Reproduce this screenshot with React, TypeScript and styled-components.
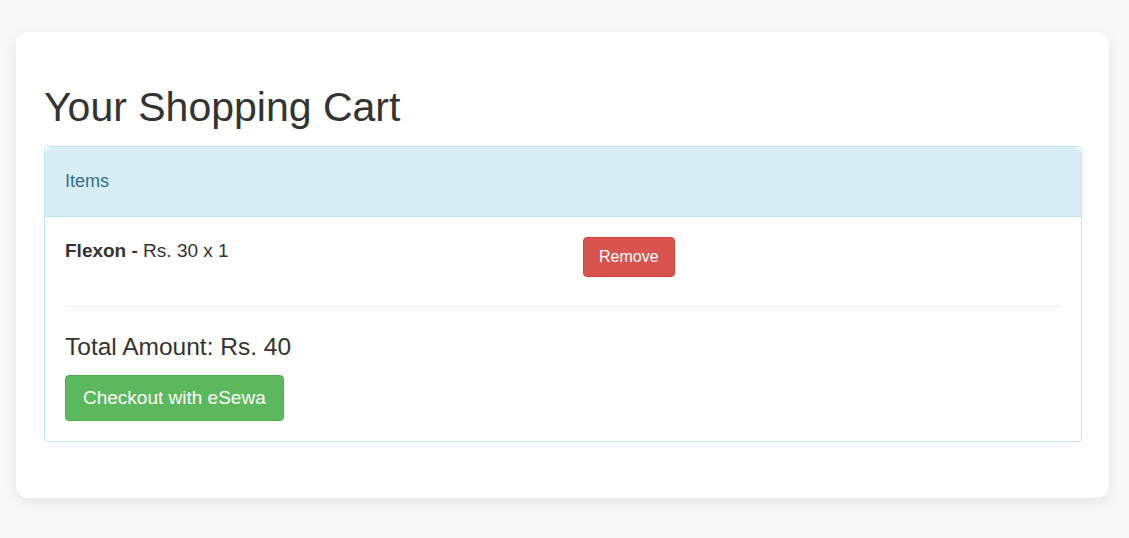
import React from "react";
import styled, { createGlobalStyle } from "styled-components";

const Global = createGlobalStyle`
  html, body { margin: 0; padding: 0; }
  body {
    background: #f8f8f8;
    font-family: "Liberation Sans", Arial, Helvetica, sans-serif;
    color: #333;
  }
  * { box-sizing: border-box; }
`;

const Page = styled.div`
  padding: 32px 20px 40px 16px;
`;

const Card = styled.div`
  background: #fff;
  border-radius: 12px;
  box-shadow: 0 4px 14px rgba(0, 0, 0, 0.08);
  padding: 28px 27px 28px 28px;
`;

const Title = styled.h1`
  margin: 25px 0 17px;
  font-size: 41px;
  font-weight: 400;
  line-height: 44px;
  color: #333;
`;

const Panel = styled.div`
  border: 1px solid #bce8f1;
  border-radius: 4px;
  background: #fff;
  margin-bottom: 28px;
`;

const PanelHeading = styled.div`
  background: #d9edf7;
  color: #31708f;
  border-bottom: 1px solid #bce8f1;
  border-radius: 8px 8px 0 0;
  padding: 24px 20px 25px;
  font-size: 18px;
  line-height: 20px;
`;

const PanelBody = styled.div`
  padding: 20px 20px 20px 20px;
`;

const ItemRow = styled.div`
  display: grid;
  grid-template-columns: 518px 1fr;
  align-items: start;
  padding-bottom: 29px;
  border-bottom: 1px solid #eeeeee;
`;

const ItemText = styled.div`
  font-size: 19px;
  line-height: 27px;
  color: #333;
`;

const ItemName = styled.strong`
  font-weight: 700;
`;

const Btn = styled.button<{ $variant: "danger" | "success"; $size?: "lg" }>`
  font-family: "Liberation Sans", Arial, Helvetica, sans-serif;
  color: #fff;
  border-radius: 4px;
  cursor: pointer;
  border: 1px solid
    ${(p) => (p.$variant === "danger" ? "#d43f3a" : "#4cae4c")};
  background: ${(p) => (p.$variant === "danger" ? "#d9534f" : "#5cb85c")};
  font-size: ${(p) => (p.$size === "lg" ? "19px" : "16px")};
  line-height: ${(p) => (p.$size === "lg" ? "24px" : "20px")};
  padding: ${(p) => (p.$size === "lg" ? "10px 17px" : "9px 15px")};
  justify-self: start;
`;

const Total = styled.h3`
  margin: 27px 0 15px;
  font-size: 24.5px;
  font-weight: 400;
  line-height: 26px;
  color: #333;
`;

export default function App() {
  return (
    <>
      <Global />
      <Page>
        <Card>
          <Title>Your Shopping Cart</Title>
          <Panel>
            <PanelHeading>Items</PanelHeading>
            <PanelBody>
              <ItemRow>
                <ItemText>
                  <ItemName>Flexon -</ItemName> Rs. 30 x 1
                </ItemText>
                <Btn $variant="danger">Remove</Btn>
              </ItemRow>
              <Total>Total Amount: Rs. 40</Total>
              <Btn $variant="success" $size="lg">
                Checkout with eSewa
              </Btn>
            </PanelBody>
          </Panel>
        </Card>
      </Page>
    </>
  );
}
